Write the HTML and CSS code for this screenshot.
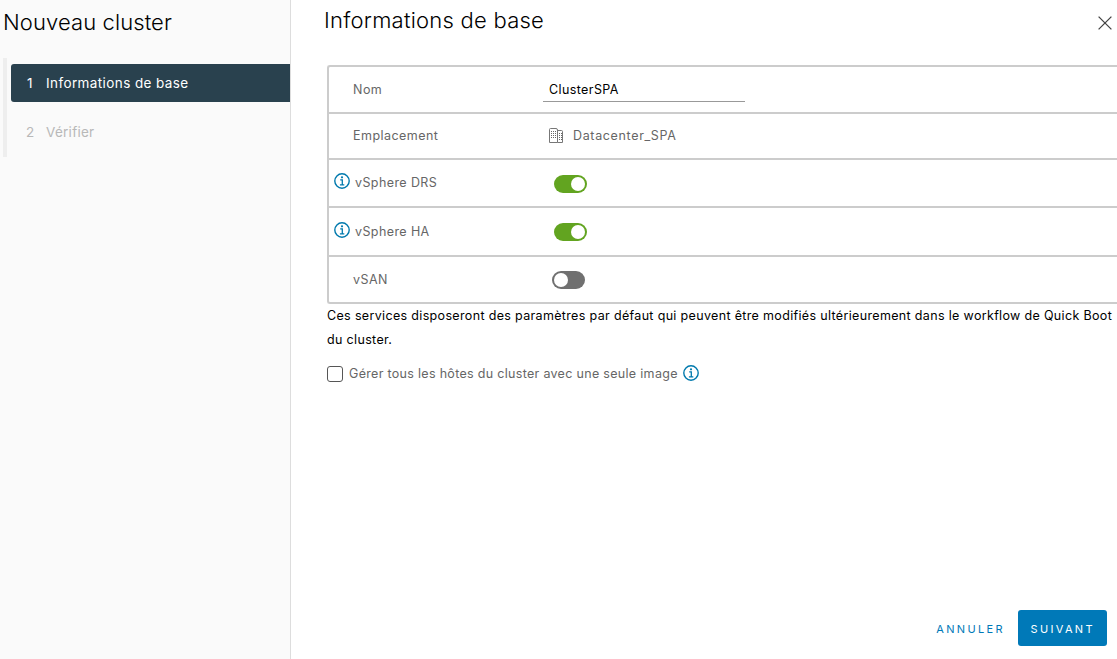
FILE: index.html
```html
<!DOCTYPE html>
<html lang="fr">
<head>
<meta charset="utf-8">
<title>Nouveau cluster</title>
<link rel="stylesheet" href="styles.css">
</head>
<body>
<svg class="defs" width="0" height="0">
  <symbol id="info" viewBox="0 0 16 16">
    <circle cx="8" cy="8" r="7.2" fill="none" stroke="#0079ad" stroke-width="1.4"/>
    <circle cx="8" cy="4.3" r="1.1" fill="#0079ad"/>
    <path d="M6.2 6.9H8.3V11.6M5.9 11.8H10.3" fill="none" stroke="#0079ad" stroke-width="1.3"/>
  </symbol>
</svg>
<div class="wizard">
  <aside class="sidebar">
    <h1 class="title">Nouveau cluster</h1>
    <ol class="steps">
      <li class="step active"><span class="num">1</span><span>Informations de base</span></li>
      <li class="step"><span class="num">2</span><span class="tight">Vérifier</span></li>
    </ol>
  </aside>
  <main class="content">
    <header class="header">
      <h2 class="heading">Informations de base</h2>
      <svg class="close" width="14" height="14" viewBox="0 0 14 14"><path d="M.6.6 13.4 13.4M13.4.6.6 13.4" stroke="#444" stroke-width="1.3"/></svg>
    </header>
    <section class="table">
      <div class="row r-name"><div class="label">Nom</div><div class="field">ClusterSPA</div></div>
      <div class="row r-place"><div class="label">Emplacement</div>
        <svg class="building" width="15" height="16" viewBox="0 0 15 16"><path d="M1.5.5H7Q8.5.5 8.5 2V14.5H.5V1.5Q.5.5 1.5.5ZM8.5 2.5H12.5Q13.5 2.5 13.5 3.5V14.5H8.5" fill="none" stroke="#777"/><path d="M2 3.5H7.5M2 5.5H7.5M2 7.5H7.5M2 9.5H7.5M10 5.5H13M10 7.5H13M10 9.5H13M10 11.5H13" stroke="#666" stroke-dasharray="1 1"/></svg>
        <span class="place">Datacenter_SPA</span></div>
      <div class="row r-drs"><svg class="info"><use href="#info"/></svg><div class="label">vSphere DRS</div><span class="toggle on"></span></div>
      <div class="row r-ha"><svg class="info"><use href="#info"/></svg><div class="label">vSphere HA</div><span class="toggle on"></span></div>
      <div class="row r-vsan"><div class="label">vSAN</div><span class="toggle"></span></div>
    </section>
    <p class="note">Ces services disposeront des paramètres par défaut qui peuvent être modifiés ultérieurement dans le workflow de Quick Boot<br>du cluster.</p>
    <div class="option"><span class="checkbox"></span><span class="option-text">Gérer tous les hôtes du cluster avec une seule image</span><svg class="info"><use href="#info"/></svg></div>
    <footer class="footer"><span class="cancel">ANNULER</span><span class="next">SUIVANT</span></footer>
  </main>
</div>
</body>
</html>
```
FILE: styles.css
```css
* { box-sizing: border-box; }
body { margin: 0; font-family: Inter, "Open Sans", sans-serif; font-size: 12.5px; color: #666; background: #fff; overflow: hidden; }
.defs { position: absolute; }
.wizard { display: flex; height: 659px; }
.sidebar { width: 291px; flex: none; background: #fafafa; border-right: 1px solid #ddd; }
.title, .heading { margin: 0; font-size: 22px; font-weight: 300; color: #000; line-height: 28px; white-space: nowrap; }
.title { padding: 8px 0 0 3px; height: 58px; letter-spacing: .1px; }
.heading { letter-spacing: .24px; }
.steps { list-style: none; margin: 0 0 0 3px; padding: 6px 0 0 4px; height: 99px; border-left: 4px solid #eee; }
.step { display: flex; align-items: center; height: 38px; margin-bottom: 11px; padding: 0 0 1px 15px; font-size: 13.5px; letter-spacing: .4px; color: #b8b8b8; border-radius: 3px 0 0 3px; }
.num { width: 20px; padding-left: 1px; }
.step:last-child .num { padding-left: 0; }
.tight { letter-spacing: .27px; }
.active { background: #29414e; color: #fff; }
.content { flex: 1; min-width: 0; display: flex; flex-direction: column; }
.header { display: flex; justify-content: space-between; height: 65px; padding: 6px 5px 0 33px; }
.close { margin-top: 10px; }
.table { margin-left: 36px; border: 2px solid #ccc; border-right: 0; border-radius: 3px 0 0 3px; }
.row { display: flex; align-items: center; border-bottom: 2px solid #ccc; padding-left: 24px; white-space: nowrap; }
.row:last-child { border-bottom: 0; }
.label { width: 190px; flex: none; padding-bottom: 1px; letter-spacing: .46px; }
.r-name { height: 47px; }
.field { width: 202px; height: 24px; padding-left: 6px; line-height: 23px; letter-spacing: .4px; border-bottom: 1px solid #999; color: #000; }
.r-place { height: 46px; }
.building { margin: 0 9px 0 6px; }
.place { padding-bottom: 1px; letter-spacing: .65px; }
.r-drs, .r-ha { padding-left: 5px; }
.r-drs { height: 48px; }
.r-ha { height: 49px; }
.r-vsan { height: 45px; }
.info { width: 16px; height: 16px; flex: none; }
.row .info { margin: 0 5px 3px 0; }
.r-drs .info { margin-bottom: 4px; }
.r-drs .label, .r-ha .label { width: 199px; letter-spacing: .4px; }
.toggle { display: flex; width: 33px; height: 18px; padding: 2px; border-radius: 9px; background: #707070; }
.r-drs .toggle { margin-top: 2px; }
.r-vsan .toggle { margin-left: 9px; }
.toggle::before { content: ""; width: 14px; height: 14px; border-radius: 50%; background: #fff; }
.on { background: #62a420; justify-content: flex-end; }
.note { margin: 0 0 0 36px; line-height: 24px; letter-spacing: .338px; color: #000; white-space: nowrap; }
.option { display: flex; align-items: center; margin: 10px 0 0 36px; height: 24px; }
.checkbox { width: 16px; height: 16px; margin-right: 6px; border: 1px solid #565656; border-radius: 3px; }
.option-text { padding-bottom: 1px; letter-spacing: .31px; }
.option .info { margin: 0 0 2px 5px; }
.footer { display: flex; align-items: center; justify-content: flex-end; margin-top: auto; padding: 0 10px 13px 0; font-size: 11px; letter-spacing: 2.35px; color: #0079b8; }
.cancel { padding-top: 2px; }
.next { height: 36px; width: 89px; padding-left: 12.5px; margin-left: 13px; line-height: 38px; border-radius: 3px; background: #0079b8; color: #fff; }
```
